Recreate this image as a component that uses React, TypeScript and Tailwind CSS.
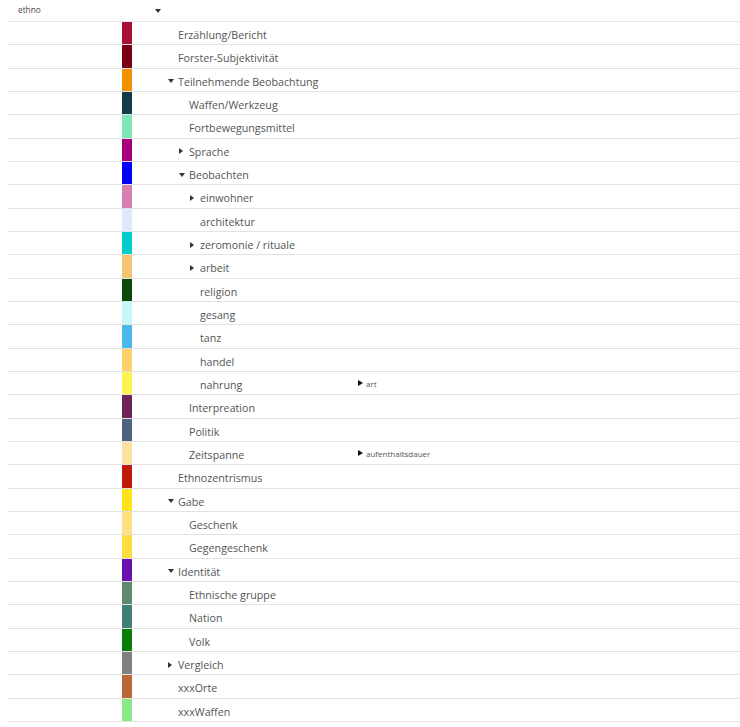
type Node = {
  label: string;
  color: string;
  level: number;
  caret?: "down" | "right";
  extra?: string;
};

const nodes: Node[] = [
  { label: "Erzählung/Bericht", color: "bg-[#a8103a]", level: 0 },
  { label: "Forster-Subjektivität", color: "bg-[#7a0016]", level: 0 },
  { label: "Teilnehmende Beobachtung", color: "bg-[#f39200]", level: 0, caret: "down" },
  { label: "Waffen/Werkzeug", color: "bg-[#133c48]", level: 1 },
  { label: "Fortbewegungsmittel", color: "bg-[#7ee6b4]", level: 1 },
  { label: "Sprache", color: "bg-[#a6007d]", level: 1, caret: "right" },
  { label: "Beobachten", color: "bg-[#0000ff]", level: 1, caret: "down" },
  { label: "einwohner", color: "bg-[#d580b0]", level: 2, caret: "right" },
  { label: "architektur", color: "bg-[#e0e8fc]", level: 2 },
  { label: "zeromonie / rituale", color: "bg-[#00cccc]", level: 2, caret: "right" },
  { label: "arbeit", color: "bg-[#f6c470]", level: 2, caret: "right" },
  { label: "religion", color: "bg-[#0c4a0c]", level: 2 },
  { label: "gesang", color: "bg-[#c8f7fa]", level: 2 },
  { label: "tanz", color: "bg-[#4ab9ea]", level: 2 },
  { label: "handel", color: "bg-[#ffcf6a]", level: 2 },
  { label: "nahrung", color: "bg-[#fef24c]", level: 2, extra: "art" },
  { label: "Interpreation", color: "bg-[#6e2454]", level: 1 },
  { label: "Politik", color: "bg-[#4d6480]", level: 1 },
  { label: "Zeitspanne", color: "bg-[#fde1a0]", level: 1, extra: "aufenthaltsdauer" },
  { label: "Ethnozentrismus", color: "bg-[#c01a0a]", level: 0 },
  { label: "Gabe", color: "bg-[#ffe21a]", level: 0, caret: "down" },
  { label: "Geschenk", color: "bg-[#ffe080]", level: 1 },
  { label: "Gegengeschenk", color: "bg-[#fedd3d]", level: 1 },
  { label: "Identität", color: "bg-[#6a0fb0]", level: 0, caret: "down" },
  { label: "Ethnische gruppe", color: "bg-[#5d8a70]", level: 1 },
  { label: "Nation", color: "bg-[#3f8075]", level: 1 },
  { label: "Volk", color: "bg-[#087e08]", level: 1 },
  { label: "Vergleich", color: "bg-[#808080]", level: 0, caret: "right" },
  { label: "xxxOrte", color: "bg-[#b9683a]", level: 0 },
  { label: "xxxWaffen", color: "bg-[#8be886]", level: 0 },
];

const indent = ["pl-[36px]", "pl-[47px]", "pl-[58px]"];

function Caret({ dir }: { dir?: "down" | "right" }) {
  if (dir === "down")
    return <span className="inline-block w-0 h-0 border-l-[3.5px] border-r-[3.5px] border-t-[4px] border-l-transparent border-r-transparent border-t-[#333]" />;
  if (dir === "right")
    return <span className="inline-block w-0 h-0 border-t-[3.5px] border-b-[3.5px] border-l-[4px] border-t-transparent border-b-transparent border-l-[#333]" />;
  return null;
}

export default function App() {
  return (
    <div className="w-[740px] h-[727px] bg-white pl-2 overflow-hidden font-['Open_Sans',sans-serif] text-[#555]">
      {/* header */}
      <div className="h-[22px] flex items-center border-b border-[#e6e6e6]">
        <span className="w-[147px] pl-[10px] text-[8.3px] text-[#444]">ethno</span>
        <span className="inline-block w-0 h-0 border-l-[3.5px] border-r-[3.5px] border-t-[4px] border-l-transparent border-r-transparent border-t-[#333]" />
      </div>

      {nodes.map((n) => (
        <div key={n.label} className="h-[23.33px] flex border-b border-[#e2e2e2]">
          <div className="w-[114px] shrink-0" />
          <div className={`w-[10px] shrink-0 ${n.color}`} />
          <div className={`w-[226px] shrink-0 flex items-center ${indent[n.level]}`}>
            <span className="w-[10px] mt-[3px] flex items-center">
              <Caret dir={n.caret} />
            </span>
            <span className="pt-[4px] text-[10.7px] whitespace-nowrap">{n.label}</span>
          </div>
          {n.extra && (
            <div className="flex items-center gap-[3px]">
              <span className="inline-block w-0 h-0 border-t-[3.5px] border-b-[3.5px] border-l-[5px] border-t-transparent border-b-transparent border-l-[#111]" />
              <span className="pt-[1px] text-[8px] text-[#555]">{n.extra}</span>
            </div>
          )}
        </div>
      ))}
    </div>
  );
}
